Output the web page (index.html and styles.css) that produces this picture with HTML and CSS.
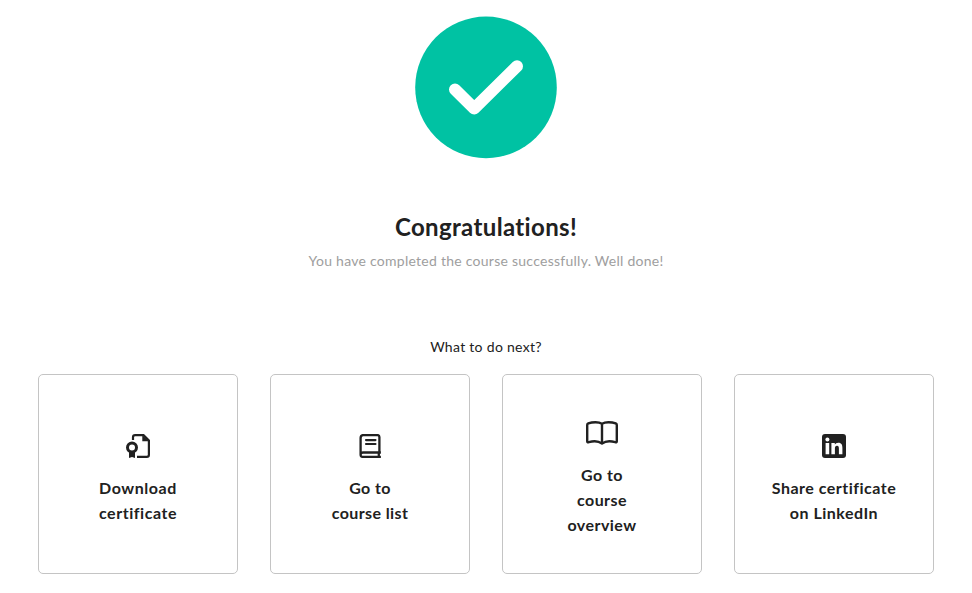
FILE: index.html
```html
<!DOCTYPE html>
<html lang="en">
<head>
<meta charset="utf-8">
<title>Course completed</title>
<link rel="stylesheet" href="styles.css">
</head>
<body>
<main class="page">
  <svg class="success" viewBox="0 0 142 142"><circle cx="71" cy="71.4" r="70.8" fill="#00c2a3"/><path d="M40 73.4L59.2 92.6L102 50.2" fill="none" stroke="#fff" stroke-width="12" stroke-linecap="round" stroke-linejoin="round"/></svg>
  <h1 class="title">Congratulations!</h1>
  <p class="subtitle">You have completed the course successfully. Well done!</p>
  <p class="next">What to do next?</p>
  <div class="cards">
    <a class="card">
      <svg class="icon" viewBox="0 0 24 24"><path d="M7 6V3.2Q7 1.1 9.1 1.1H17.5L22.9 6.5V20.8Q22.9 22.9 20.8 22.9H11" fill="none" stroke="#212121" stroke-width="2.2"/><path d="M16.3 1L23 7.3H16.3ZM3 17H9V24L6 23L3 24Z" fill="#212121"/><circle cx="6" cy="13.4" r="4.5" fill="#fff" stroke="#212121" stroke-width="3"/></svg>
      <span class="label label-1">Download<br>certificate</span>
    </a>
    <a class="card">
      <svg class="icon" viewBox="0 0 24 24"><g fill="none" stroke="#212121" stroke-width="2.3"><path d="M21.4 18.4V3Q21.4 1.1 19.5 1.1H5.2Q2.6 1.1 2.6 4V20.2M22.9 18.5H5Q2.6 18.5 2.6 20.7T5 22.9H22.9M20.8 18.5V23"/><path d="M8 6.1H17.5M8 10H17.5" stroke-width="2.1" stroke-linecap="round"/></g></svg>
      <span class="label label-2">Go to<br>course list</span>
    </a>
    <a class="card">
      <svg class="icon icon-wide" viewBox="0 0 32 24"><path d="M16 2.8Q13.5 1.2 9.5 1.2Q5.5 1.2 2.3 2.4Q1.2 2.9 1.2 4V20.2Q1.2 21.7 2.8 21.2Q11 18.8 16 22.6Q21 18.8 29.2 21.2Q30.8 21.7 30.8 20.2V4Q30.8 2.9 29.7 2.4Q26.5 1.2 22.5 1.2Q18.5 1.2 16 2.8V22.4" fill="none" stroke="#212121" stroke-width="2.4" stroke-linejoin="round"/></svg>
      <span class="label label-3">Go to<br>course<br>overview</span>
    </a>
    <a class="card">
      <svg class="icon" viewBox="0 0 24 24"><rect width="24" height="24" rx="3" fill="#212121"/><circle cx="5.4" cy="5.4" r="2" fill="#fff"/><path d="M3.6 9H7.2V20.3H3.6ZM9.4 9H12.8V10.6C13.4 9.5 14.7 8.7 16.3 8.7C19.7 8.7 20.4 11 20.4 14V20.3H16.9V14.8C16.9 13.3 16.8 11.8 15 11.8C13.2 11.8 12.9 13.2 12.9 14.7V20.3H9.4Z" fill="#fff"/></svg>
      <span class="label label-4">Share certificate<br>on LinkedIn</span>
    </a>
  </div>
</main>
</body>
</html>
```
FILE: styles.css
```css
* { box-sizing: border-box; }
body { margin: 0; background: #fff; color: #212121; font-family: Lato, sans-serif; }
.page { display: flex; flex-direction: column; align-items: center; padding-top: 16px; }
.success { display: block; width: 142px; height: 142px; overflow: visible; }
.title { margin: 53px 0 0; font-size: 24px; line-height: 32px; font-weight: 700; letter-spacing: 0.35px; white-space: nowrap; }
.subtitle { margin: 6px 0 0; font-size: 14px; line-height: 24px; color: #9e9e9e; letter-spacing: 0.26px; white-space: nowrap; }
.next { margin: 62px 0 0; font-size: 14px; line-height: 24px; letter-spacing: 0.3px; white-space: nowrap; }
.cards { display: flex; gap: 32px; margin-top: 15px; }
.card { width: 200px; height: 200px; display: flex; flex-direction: column; align-items: center; justify-content: center; border: 1px solid #c4c4c4; border-radius: 5px; }
.icon { display: block; flex: none; width: 24px; height: 24px; margin: 12px 0 17px; }
.icon-wide { width: 32px; }
.label { padding-bottom: 1px; font-size: 16px; line-height: 25px; font-weight: 700; text-align: center; white-space: nowrap; letter-spacing: 0.5px; }
.label-1 { letter-spacing: 0.55px; }
.label-2 { letter-spacing: 0.4px; }
.label-3 { padding-bottom: 3px; letter-spacing: 0.45px; }
```
